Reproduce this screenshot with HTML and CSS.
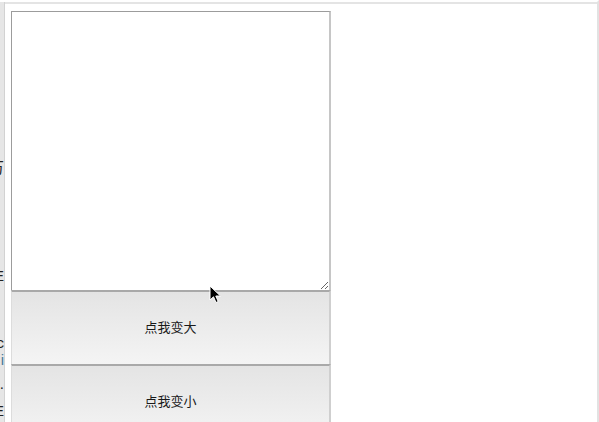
FILE: index.html
```html
<!DOCTYPE html>
<html lang="zh">
<head>
  <meta charset="UTF-8" />
  <title>textarea</title>
  <link rel="stylesheet" href="styles.css">
</head>
<body>
  <div class="page">
    <div class="rail">
      <span class="frag f1">万</span>
      <span class="frag f2">E</span>
      <span class="frag f3">c</span>
      <span class="frag f4">i</span>
      <span class="frag f5">.</span>
      <span class="frag f6">E</span>
    </div>
    <div class="main">
      <textarea class="box"></textarea>
      <button class="btn">点我变大</button>
      <button class="btn">点我变小</button>
    </div>
  </div>

  <svg class="cursor" width="13" height="19" viewBox="0 0 13 19">
    <path d="M1 1 L1 15 L4.5 11.8 L7 17.5 L9.2 16.5 L6.8 11 L11.5 11 Z" fill="#000" stroke="#fff" stroke-width="1"/>
  </svg>
</body>
</html>
```

FILE: styles.css
```css
* {
  box-sizing: border-box;
}

body {
  margin: 0;
  background: #fff;
  font-family: "Liberation Sans", "Noto Sans CJK SC", sans-serif;
  overflow: hidden;
}

.page {
  display: flex;
  height: 422px;
  border-top: 2px solid #fff;
  border-right: 2px solid #e2e2e2;
}

.rail {
  position: relative;
  width: 5px;
  background: #e6e6e6;
  border-right: 1px solid #d2d2d2;
  overflow: hidden;
}

/* clipped text peeking from the page behind */
.frag {
  position: absolute;
  right: 0;
  font-size: 15px;
  color: #222;
  line-height: 1;
}

.f1 { top: 158px; }
.f2 { top: 266px; }
.f3 { top: 333px; }
.f4 { top: 350px; color: #4a7a9a; }
.f5 { top: 374px; }
.f6 { top: 401px; }

.main {
  flex: 1;
  border-top: 2px solid #e4e4e4;
  padding: 7px 0 0 6px;
}

.box {
  display: block;
  width: 320px;
  height: 279px;
  margin: 0;
  padding: 2px;
  border-style: solid;
  border-width: 1px 2px 0 1px;
  border-color: #9c9c9c #c6c6c6 #c6c6c6 #9c9c9c;
  background: #fff;
  resize: both;
}

.btn {
  display: block;
  width: 320px;
  height: 74px;
  margin: 0;
  padding: 0 0 4px;
  border: none;
  border-top: 2px solid #a9a9a9;
  border-right: 2px solid #cfcfcf;
  border-left: 1px solid #dcdcdc;
  background: linear-gradient(#e4e4e4, #f4f4f4);
  font-family: "Noto Sans CJK SC", sans-serif;
  font-size: 13px;
  color: #1a1a1a;
}

.cursor {
  position: absolute;
  left: 209px;
  top: 285px;
}
```
